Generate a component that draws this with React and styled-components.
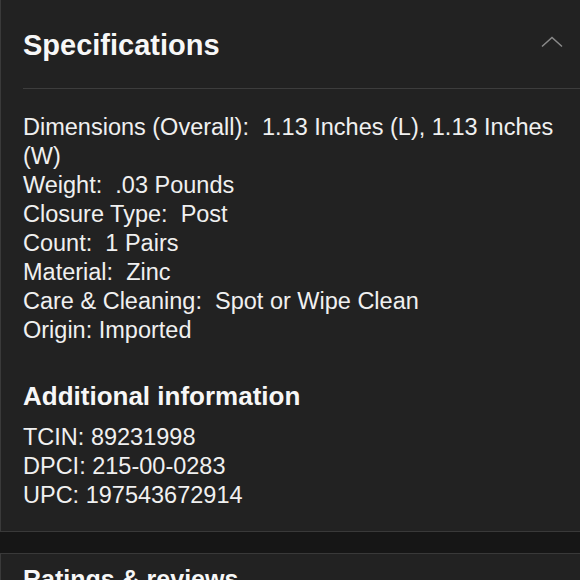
import React from "react";
import styled, { createGlobalStyle } from "styled-components";

const GlobalStyle = createGlobalStyle`
  html, body {
    margin: 0;
    padding: 0;
    background: #222222;
  }
  body {
    font-family: "Liberation Sans", Arial, sans-serif;
    color: #f2f2f2;
  }
`;

const specs = [
  ["Dimensions (Overall):", "1.13 Inches (L), 1.13 Inches (W)", true],
  ["Weight:", ".03 Pounds", true],
  ["Closure Type:", "Post", true],
  ["Count:", "1 Pairs", true],
  ["Material:", "Zinc", true],
  ["Care & Cleaning:", "Spot or Wipe Clean", true],
  ["Origin:", "Imported", false],
];

const extra = [
  ["TCIN:", "89231998"],
  ["DPCI:", "215-00-0283"],
  ["UPC:", "197543672914"],
];

function Chevron() {
  return (
    <svg width="22" height="12" viewBox="0 0 22 12">
      <polyline points="1,10.5 11,1.5 21,10.5" fill="none" stroke="#8a8a8a" strokeWidth="1.5" />
    </svg>
  );
}

function App() {
  return (
    <Page>
      <GlobalStyle />
      <Card>
        <Header>
          <Title>Specifications</Title>
          <Toggle>
            <Chevron />
          </Toggle>
        </Header>
        <Divider />
        <Body>
          <List>
            {specs.map(([k, v, wide]) => (
              <Line key={k}>
                {k}
                {wide ? "\u00a0 " : " "}
                {v}
              </Line>
            ))}
          </List>
          <SubTitle>Additional information</SubTitle>
          <List>
            {extra.map(([k, v]) => (
              <Line key={k}>
                {k} {v}
              </Line>
            ))}
          </List>
        </Body>
      </Card>
      <Gap />
      <Card>
        <Header $short>
          <Title $small>Ratings &amp; reviews</Title>
        </Header>
      </Card>
    </Page>
  );
}

export default App;

const Page = styled.div`
  width: 580px;
  height: 580px;
  overflow: hidden;
  background: #222222;
`;

const Card = styled.section`
  background: #222222;
  border-left: 1px solid #3a3a3a;
`;

const Header = styled.div`
  height: ${(p) => (p.$short ? "auto" : "88px")};
  padding: ${(p) => (p.$short ? "10px 17px 0 22px" : "2px 17px 0 22px")};
  box-sizing: border-box;
  display: flex;
  align-items: center;
  justify-content: space-between;
`;

const Title = styled.h2`
  margin: 0;
  font-size: ${(p) => (p.$small ? "25px" : "29px")};
  line-height: ${(p) => (p.$small ? "30px" : "32px")};
  font-weight: 700;
  color: #f7f7f7;
`;

const Toggle = styled.div`
  display: flex;
  align-items: center;
  margin-top: -7px;
`;

const Divider = styled.div`
  height: 1px;
  margin-left: 22px;
  background: #3d3d3d;
`;

const Body = styled.div`
  padding: 24px 20px 21px 22px;
`;

const List = styled.div`
  display: flex;
  flex-direction: column;
`;

const Line = styled.div`
  font-size: 23.5px;
  line-height: 29px;
  color: #f0f0f0;
`;

const SubTitle = styled.h3`
  margin: 36px 0 12px;
  font-size: 26px;
  line-height: 30px;
  font-weight: 700;
  color: #f7f7f7;
`;

const Gap = styled.div`
  height: 21px;
  background: #161616;
  border-top: 1px solid #393939;
  border-bottom: 1px solid #393939;
`;
